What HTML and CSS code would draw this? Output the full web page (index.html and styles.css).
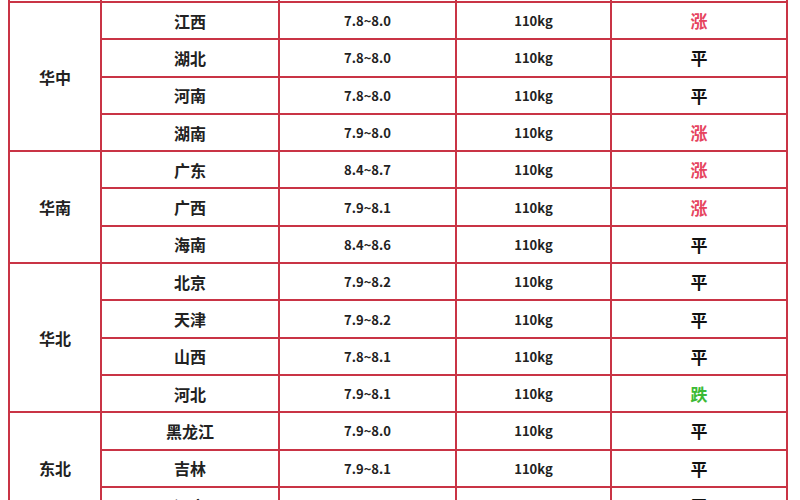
FILE: index.html
```html
<!DOCTYPE html>
<html lang="zh">
<head>
<meta charset="utf-8">
<link rel="stylesheet" href="styles.css">
</head>
<body>
<div class="page">
<table class="price">
  <colgroup>
    <col class="c-region"><col class="c-prov"><col class="c-price"><col class="c-weight"><col class="c-trend">
  </colgroup>
  <tr class="stub"><td></td><td></td><td></td><td></td><td></td></tr>
  <tr><td class="region" rowspan="4">华中</td><td class="prov">江西</td><td class="num">7.8~8.0</td><td class="kg">110kg</td><td class="trend up">涨</td></tr>
  <tr><td class="prov">湖北</td><td class="num">7.8~8.0</td><td class="kg">110kg</td><td class="trend flat">平</td></tr>
  <tr><td class="prov">河南</td><td class="num">7.8~8.0</td><td class="kg">110kg</td><td class="trend flat">平</td></tr>
  <tr><td class="prov">湖南</td><td class="num">7.9~8.0</td><td class="kg">110kg</td><td class="trend up">涨</td></tr>
  <tr><td class="region" rowspan="3">华南</td><td class="prov">广东</td><td class="num">8.4~8.7</td><td class="kg">110kg</td><td class="trend up">涨</td></tr>
  <tr><td class="prov">广西</td><td class="num">7.9~8.1</td><td class="kg">110kg</td><td class="trend up">涨</td></tr>
  <tr><td class="prov">海南</td><td class="num">8.4~8.6</td><td class="kg">110kg</td><td class="trend flat">平</td></tr>
  <tr><td class="region" rowspan="4">华北</td><td class="prov">北京</td><td class="num">7.9~8.2</td><td class="kg">110kg</td><td class="trend flat">平</td></tr>
  <tr><td class="prov">天津</td><td class="num">7.9~8.2</td><td class="kg">110kg</td><td class="trend flat">平</td></tr>
  <tr><td class="prov">山西</td><td class="num">7.8~8.1</td><td class="kg">110kg</td><td class="trend flat">平</td></tr>
  <tr><td class="prov">河北</td><td class="num">7.9~8.1</td><td class="kg">110kg</td><td class="trend down">跌</td></tr>
  <tr><td class="region" rowspan="3">东北</td><td class="prov">黑龙江</td><td class="num">7.9~8.0</td><td class="kg">110kg</td><td class="trend flat">平</td></tr>
  <tr><td class="prov">吉林</td><td class="num">7.9~8.1</td><td class="kg">110kg</td><td class="trend flat">平</td></tr>
  <tr><td class="prov">辽宁</td><td class="num">7.9~8.1</td><td class="kg">110kg</td><td class="trend flat">平</td></tr>
</table>
</div>
</body>
</html>
```
FILE: styles.css
```css
html, body {
  margin: 0;
  padding: 0;
  background: #ffffff;
}
.page {
  width: 800px;
  height: 500px;
  overflow: hidden;
  padding-left: 8px;
  box-sizing: border-box;
}
.price {
  border-collapse: collapse;
  table-layout: fixed;
  width: 778px;
  font-family: "Noto Sans CJK SC", "Noto Sans", sans-serif;
  font-weight: bold;
  color: #222222;
}
.c-region { width: 92px; }
.c-prov { width: 178px; }
.c-price { width: 177px; }
.c-weight { width: 155px; }
.c-trend { width: 176px; }
.price td {
  border: 2px solid #c93445;
  text-align: center;
  vertical-align: middle;
  height: 35.3px;
  padding: 0;
  line-height: 1;
}
.price tr.stub td {
  height: 1px;
  border-top: none;
}
.price td.region { font-size: 16px; }
.price td.prov { font-size: 16px; }
.price td.num { font-size: 13px; }
.price td.kg { font-size: 13px; }
.price td.trend { font-size: 17px; }
.trend.up { color: #e6445f; }
.trend.flat { color: #111111; }
.trend.down { color: #3cba35; }
```
